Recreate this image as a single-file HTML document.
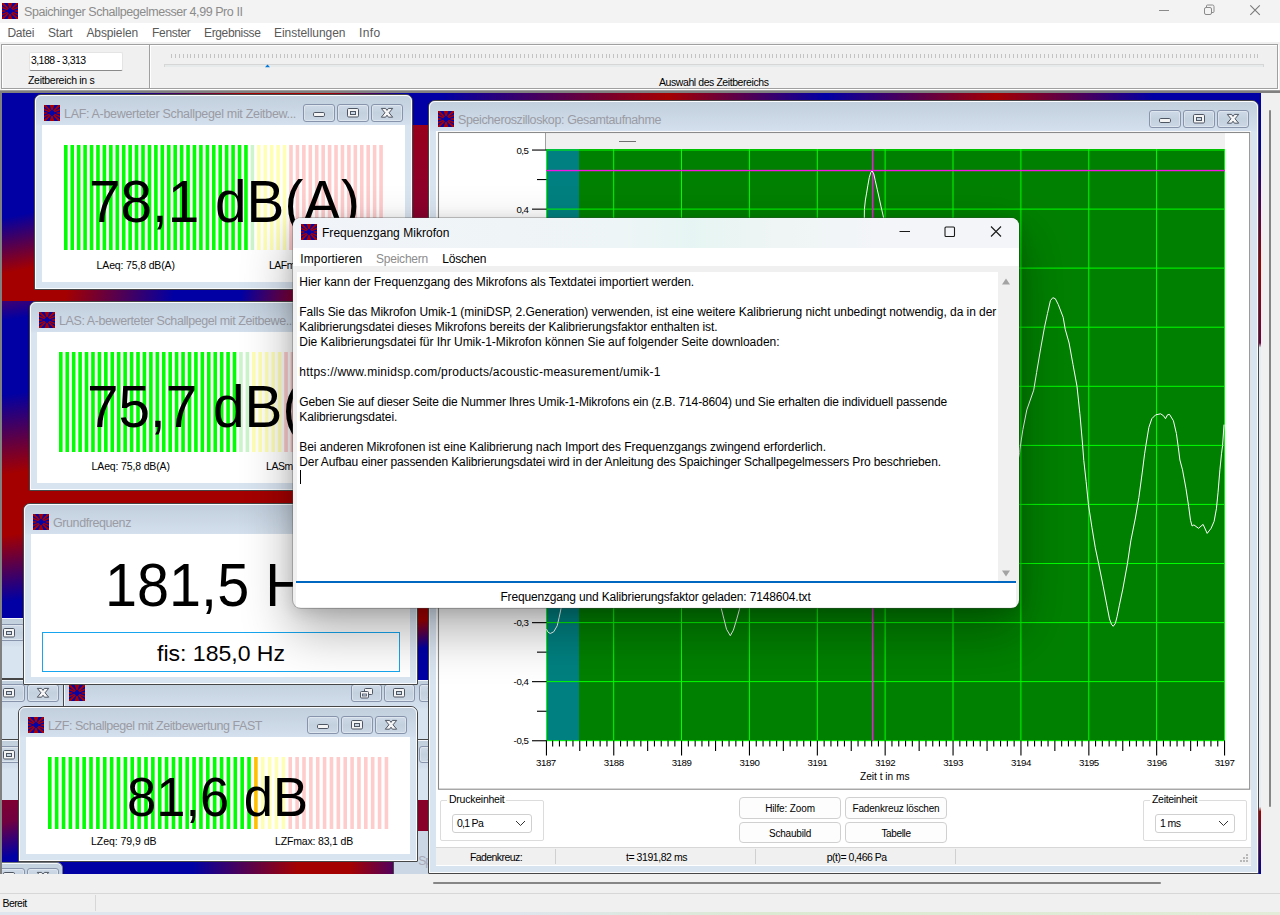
<!DOCTYPE html>
<html lang="de"><head><meta charset="utf-8"><title>Spaichinger Schallpegelmesser 4,99 Pro II</title>
<style>
*{box-sizing:border-box}
html,body{margin:0;padding:0}
body{width:1280px;height:915px;overflow:hidden;position:relative;background:#f0f0f0;font-family:"Liberation Sans",sans-serif;font-size:12px;color:#000}
.a{position:absolute}
.ico{display:block}
span[style]{white-space:pre}
/* main frame */
#tb{left:0;top:0;width:1280px;height:23px;background:#f3f3f3}
#tb .t{left:24px;top:3.5px;line-height:16px;font-size:12.5px;color:#8b8b8b;white-space:pre}
#mb{left:0;top:23px;width:1280px;height:19px;background:#fff}
#mb span{position:absolute;top:1.2px;line-height:16px;font-size:12px;color:#5a5a5a;white-space:pre}
#tool{left:0;top:42px;width:1280px;height:51px;background:#f0f0f0}
.grp{border:1px solid #a0a0a0;box-shadow:1px 1px 0 #fff, inset 1px 1px 0 #fff}
.sm{font-size:10.5px;line-height:13px;white-space:pre}
/* mdi */
#mdi{left:0;top:93px;width:1261px;height:781px;overflow:hidden;background:#0000a4}
#mdi>.in{position:absolute;left:0;top:-93px;width:1280px;height:915px}
.mw{position:absolute;border:1px solid #464646;border-radius:7px 7px 1px 1px;background:linear-gradient(#c1cedc 0,#d3dfec 29px,#d9e4f1 31px)}
.mw .hl{position:absolute;left:0;top:0;right:0;bottom:0;border:1px solid #fbfdff;border-radius:6px 6px 0 0}
.mw .mi{position:absolute;left:9px;top:10px}
.mw .ttl{position:absolute;left:29px;top:10.5px;line-height:16px;font-size:12.5px;color:#9a9ba4;white-space:pre}
.cb{position:absolute;top:9px;width:32px;height:18px;border:1px solid #8794ab;border-radius:3px;background:linear-gradient(#cfdae7,#c3d0de 50%,#cbd7e5);box-shadow:inset 0 0 0 1px rgba(255,255,255,.35)}
.cb svg{position:absolute;left:-1px;top:-1px}
.mw .cl{position:absolute;left:7px;top:30px;right:7px;bottom:7px;background:#fff;overflow:hidden}
.bars{position:absolute}
.big{position:absolute;white-space:pre;color:#000}
.chart{position:absolute}
.axl text{font-family:"Liberation Sans",sans-serif;font-size:9.7px;fill:#000;letter-spacing:-0.42px}
.btn{position:absolute;border:1px solid #d0d0d0;border-radius:4px;background:#fdfdfd;text-align:center;font-size:10px;line-height:21.5px;white-space:pre}
.combo{position:absolute;border:1px solid #d0d0d0;border-radius:3px;background:#fff;font-size:10.5px;line-height:17px;padding-left:4px;white-space:pre}
.gb{position:absolute;border:1px solid #dcdcdc;border-radius:2px}
.gb>i{position:absolute;left:6px;top:-8px;background:#fff;padding:0 2px;font-style:normal;font-size:10.5px;line-height:13px;white-space:pre}
/* dialog */
#dlg{left:293px;top:217.7px;width:726px;height:390px;border-radius:8px;background:#f0f0f0;box-shadow:0 0 0 1px rgba(70,70,70,.3),0 22px 50px 2px rgba(0,0,0,.31),0 3px 16px rgba(0,0,0,.14);overflow:hidden}
#dlg .cap{left:0;top:0;width:726px;height:30px;background:linear-gradient(90deg,#f1f4f9 0,#eef5f6 45%,#e6f5f3 55%,#eef5f4 66%,#f3f5f9 80%)}
#dlg .menu{left:0;top:30px;width:726px;height:18.3px;background:#fff}
#dlg .menu span{position:absolute;top:1.5px;font-size:12px;line-height:16px;white-space:pre}
#dlg .txt{left:4px;top:54px;width:717px;height:309px;background:#fff}
#dlg .txt div{position:absolute;left:2.3px;height:15px;line-height:15px;font-size:12px;white-space:pre}
</style></head>
<body>
<!-- ================= main title bar ================= -->
<div id="tb" class="a">
 <div class="a" style="left:2px;top:3px"><svg class="ico" viewBox="0 0 16 16" width="16" height="16"><rect width="16" height="16" fill="#0505a6"/><g fill="#ac0000"><polygon points="5.6,0 10.4,0 8.6,5 7.4,5"/><polygon points="5.6,16 10.4,16 8.6,11 7.4,11"/><polygon points="0,0 1.8,0 7,5.6 5.8,6.2 0,1.6"/><polygon points="16,0 14.2,0 9,5.6 10.2,6.2 16,1.6"/><polygon points="0,16 1.8,16 7,10.4 5.8,9.8 0,14.4"/><polygon points="16,16 14.2,16 9,10.4 10.2,9.8 16,14.4"/><polygon points="0,3.6 0,5.2 5.4,7.2 6,6.2"/><polygon points="16,3.6 16,5.2 10.6,7.2 10,6.2"/><polygon points="0,12.4 0,10.8 5.4,8.8 6,9.8"/><polygon points="16,12.4 16,10.8 10.6,8.8 10,9.8"/><polygon points="0,7 0,9 3.4,8.4 3.4,7.6"/><polygon points="16,7 16,9 12.6,8.4 12.6,7.6"/></g></svg></div>
 <div class="a t"><span style="letter-spacing:-0.433px">Spaichinger Schallpegelmesser 4,99 Pro II</span></div>
 <svg class="a" style="left:1150px;top:0" width="130" height="23" fill="none" stroke="#8a8a8a" stroke-width="1"><path d="M9 10.5h10"/><rect x="54.5" y="7.500" width="7" height="7" rx="1.5"/><path d="M56.500 7.500v-1.500q0-1 1-1h5q1.500 0 1.500 1.500v5q0 1-1 1h-1.500"/><path d="M100.300 5.300l9.500 9.500M109.800 5.300l-9.500 9.500" stroke="#7c7c7c" stroke-width="1.15"/></svg>
</div>
<div id="mb" class="a">
 <span style="left:7.500px"><span style="letter-spacing:-0.303px">Datei</span></span>
 <span style="left:48px"><span style="letter-spacing:-0.169px">Start</span></span>
 <span style="left:86.5px"><span style="letter-spacing:-0.135px">Abspielen</span></span>
 <span style="left:152px"><span style="letter-spacing:-0.312px">Fenster</span></span>
 <span style="left:204px"><span style="letter-spacing:-0.355px">Ergebnisse</span></span>
 <span style="left:274px"><span style="letter-spacing:-0.043px">Einstellungen</span></span>
 <span style="left:359px"><span style="letter-spacing:0.371px">Info</span></span>
</div>
<!-- ================= toolbar ================= -->
<div id="tool" class="a">
 <div class="a grp" style="left:1px;top:2px;width:149px;height:45px"></div>
 <div class="a grp" style="left:149px;top:2px;width:1129px;height:45px"></div>
 <div class="a" style="left:0;top:48px;width:1280px;height:1px;background:#a0a0a0"></div>
 <div class="a" style="left:0;top:49px;width:1280px;height:2px;background:#808080"></div>
 <div class="a" style="left:29px;top:10px;width:94px;height:19px;background:#fff;border:1px solid #e4e4e4;border-bottom-color:#8a8a8a;border-radius:2px"></div>
 <div class="a sm" style="left:31px;top:12.400px"><span style="letter-spacing:-0.569px">3,188 - 3,313</span></div>
 <div class="a sm" style="left:28px;top:32px"><span style="letter-spacing:-0.294px">Zeitbereich in s</span></div>
 <div class="a" style="left:171px;top:12px;width:1087px;height:4px;background:repeating-linear-gradient(90deg,#c3c3c3 0,#c3c3c3 1px,transparent 1px,transparent 3.88px)"></div>
 <div class="a" style="left:164px;top:22px;width:1100px;height:3px;background:#e7eaea;border:1px solid #d6d6d6;border-bottom:0"></div>
 <svg class="a" style="left:264px;top:21px" width="8" height="5"><path d="M1 4.300L3.500 1.400L6 4.300z" fill="#0078d7"/></svg>
 <div class="a sm" style="left:659px;top:34px"><span style="letter-spacing:-0.423px">Auswahl des Zeitbereichs</span></div>
</div>
<!-- ================= MDI client ================= -->
<div id="mdi" class="a"><div class="in">

<div class="a" style="left:0;top:93px;width:1261px;height:8px;background:linear-gradient(90deg,#0000a4 0,#0000a4 10%,#a40000 19.5%,#a40000 26%,#0000a4 32%,#0000a4 35%,#a40000 53%,#0000a4 65.5%,#a40000 79%,#0000a4 91.5%)"></div>
<div class="a" style="left:0;top:93px;width:40px;height:208px;background:linear-gradient(168deg,#0000a4 0,#0000a4 58%,#a40000 84%)"></div>
<div class="a" style="left:0;top:290px;width:300px;height:11px;background:linear-gradient(100deg,#a40000 0,#a40000 22%,#0000a4 58%,#0000a4 80%,#900020 100%)"></div>
<div class="a" style="left:0;top:301px;width:40px;height:330px;background:linear-gradient(172deg,#400070 0,#0000a4 6%,#0000a4 28%,#a40000 52%,#a40000 70%,#0000a4 90%)"></div>
<div class="a" style="left:24px;top:489px;width:276px;height:15px;background:#a40000"></div>
<div class="a" style="left:413px;top:125px;width:16px;height:100px;background:linear-gradient(#98001c,#880030)"></div>
<div class="a" style="left:418px;top:600px;width:11px;height:80px;background:linear-gradient(170deg,#a40000 0,#a40000 25%,#0000a4 60%)"></div>
<div class="a" style="left:0;top:800px;width:20px;height:74px;background:linear-gradient(165deg,#800030 0,#700040 30%,#0000a4 75%)"></div>
<div class="a" style="left:20px;top:860px;width:375px;height:14px;background:linear-gradient(90deg,#0000a4 0,#0000a4 46%,#a40000 74%,#a40000 88%,#500060 100%)"></div>
<div class="a" style="left:418px;top:798px;width:11px;height:36px;background:#880028"></div>
<div class="a" style="left:1258px;top:93px;width:3px;height:781px;background:linear-gradient(#0000a4 0,#0000a4 7%,#a40000 22%,#700040 32%,#e6ecf3 32.600%,#e6ecf3 91.400%,#a40000 92%,#500060 96%,#0000a4 100%)"></div>

<div class="a" style="left:2px;top:618px;width:22px;height:60px;border-top:1px solid #f4f8fc;background:linear-gradient(#c1cedc 0,#d3dfec 26px,#d9e4f1 28px)"></div><div class="cb" style="left:-7.5px;top:623.5px;width:32px;height:17.5px"><svg style="left:auto;right:-1px" viewBox="0 0 32 18" width="32" height="18"><rect x="10.5" y="4.5" width="11" height="8.5" rx="1.2" fill="#f4f4f4" stroke="#4e5563"/><rect x="13.5" y="7.5" width="5" height="3" fill="#c9d6e4" stroke="#4e5563"/></svg></div><div class="a" style="left:2px;top:678px;width:22px;height:1.500px;background:#464646"></div><div class="a" style="left:2px;top:679.500px;width:428px;height:60px;border-top:1px solid #f4f8fc;background:linear-gradient(#c1cedc 0,#d3dfec 26px,#d9e4f1 28px)"></div><div class="cb" style="left:-7.5px;top:684px;width:32px;height:18px"><svg style="left:auto;right:-1px" viewBox="0 0 32 18" width="32" height="18"><rect x="10.5" y="4.5" width="11" height="8.5" rx="1.2" fill="#f4f4f4" stroke="#4e5563"/><rect x="13.5" y="7.5" width="5" height="3" fill="#c9d6e4" stroke="#4e5563"/></svg></div><div class="cb" style="left:27.3px;top:684px;width:31.5px;height:18px"><svg style="left:auto;right:-1px" viewBox="0 0 32 18" width="32" height="18"><path d="M10.300 4.400h4.300l1.400 2l1.400-2h4.300l-3.650 4.400l3.650 4.400h-4.300l-1.400-2l-1.400 2h-4.300l3.650-4.400z" fill="#f6f6f6" stroke="#4e5563" stroke-width="1" stroke-linejoin="round"/></svg></div><div class="a" style="left:63px;top:680px;width:1.400px;height:30px;background:#464646"></div><div class="a" style="left:64.400px;top:680px;width:1px;height:30px;background:#f4f8fc"></div><div class="a" style="left:69px;top:685px"><svg class="ico" viewBox="0 0 16 16" width="16" height="16"><rect width="16" height="16" fill="#0505a6"/><g fill="#ac0000"><polygon points="5.6,0 10.4,0 8.6,5 7.4,5"/><polygon points="5.6,16 10.4,16 8.6,11 7.4,11"/><polygon points="0,0 1.8,0 7,5.6 5.8,6.2 0,1.6"/><polygon points="16,0 14.2,0 9,5.6 10.2,6.2 16,1.6"/><polygon points="0,16 1.8,16 7,10.4 5.8,9.8 0,14.4"/><polygon points="16,16 14.2,16 9,10.4 10.2,9.8 16,14.4"/><polygon points="0,3.6 0,5.2 5.4,7.2 6,6.2"/><polygon points="16,3.6 16,5.2 10.6,7.2 10,6.2"/><polygon points="0,12.4 0,10.8 5.4,8.8 6,9.8"/><polygon points="16,12.4 16,10.8 10.6,8.8 10,9.8"/><polygon points="0,7 0,9 3.4,8.4 3.4,7.6"/><polygon points="16,7 16,9 12.6,8.4 12.6,7.6"/></g></svg></div><div class="cb" style="left:350.6px;top:684px;width:31px;height:18px"><svg style="left:auto;right:-1px" viewBox="0 0 32 18" width="32" height="18"><rect x="14.5" y="4.5" width="8" height="6" rx="1" fill="#f4f4f4" stroke="#4e5563"/><rect x="10.5" y="7.5" width="8" height="6.5" rx="1" fill="#f4f4f4" stroke="#4e5563"/><rect x="12.5" y="10" width="4" height="2" fill="#c9d6e4" stroke="#4e5563" stroke-width=".8"/></svg></div><div class="cb" style="left:384.3px;top:684px;width:31.2px;height:18px"><svg style="left:auto;right:-1px" viewBox="0 0 32 18" width="32" height="18"><rect x="10.5" y="4.5" width="11" height="8.5" rx="1.2" fill="#f4f4f4" stroke="#4e5563"/><rect x="13.5" y="7.5" width="5" height="3" fill="#c9d6e4" stroke="#4e5563"/></svg></div><div class="cb" style="left:418.5px;top:684px;width:31px;height:18px"><svg style="left:auto;right:-1px" viewBox="0 0 32 18" width="32" height="18"><path d="M10.300 4.400h4.300l1.400 2l1.400-2h4.300l-3.650 4.400l3.650 4.400h-4.300l-1.400-2l-1.400 2h-4.300l3.650-4.400z" fill="#f6f6f6" stroke="#4e5563" stroke-width="1" stroke-linejoin="round"/></svg></div><div class="a" style="left:2px;top:738.500px;width:428px;height:1.800px;background:#464646"></div><div class="a" style="left:2px;top:740.300px;width:428px;height:60px;border-top:1px solid #f4f8fc;background:linear-gradient(#c1cedc 0,#d3dfec 26px,#d9e4f1 28px)"></div><div class="cb" style="left:-7.5px;top:745.5px;width:32px;height:17.5px"><svg style="left:auto;right:-1px" viewBox="0 0 32 18" width="32" height="18"><rect x="10.5" y="4.5" width="11" height="8.5" rx="1.2" fill="#f4f4f4" stroke="#4e5563"/><rect x="13.5" y="7.5" width="5" height="3" fill="#c9d6e4" stroke="#4e5563"/></svg></div><div class="cb" style="left:418.5px;top:745.5px;width:31px;height:17.5px"><svg style="left:auto;right:-1px" viewBox="0 0 32 18" width="32" height="18"><path d="M10.300 4.400h4.300l1.400 2l1.400-2h4.300l-3.650 4.400l3.650 4.400h-4.300l-1.400-2l-1.400 2h-4.300l3.650-4.400z" fill="#f6f6f6" stroke="#4e5563" stroke-width="1" stroke-linejoin="round"/></svg></div><div class="a" style="left:393.300px;top:831px;width:40px;height:45px;border-left:1.200px solid #464646;background:#cbd7e4"></div><div class="a" style="left:418.300px;top:853px;font-size:12px;line-height:16px;letter-spacing:-1px;color:#a6a8b6;white-space:pre">Speicheroszilloskop</div><div class="a" style="left:-10px;top:862px;width:72.500px;height:20px;border:1px solid #70757c;border-radius:0 6px 0 0;box-shadow:inset 0 1px 0 #f4f8fc;background:#c5d2e0"></div><div class="cb" style="left:-7.5px;top:867.5px;width:32px;height:18px"><svg style="left:auto;right:-1px" viewBox="0 0 32 18" width="32" height="18"><rect x="10.5" y="4.5" width="11" height="8.5" rx="1.2" fill="#f4f4f4" stroke="#4e5563"/><rect x="13.5" y="7.5" width="5" height="3" fill="#c9d6e4" stroke="#4e5563"/></svg></div><div class="cb" style="left:27.3px;top:867.5px;width:31.5px;height:18px"><svg style="left:auto;right:-1px" viewBox="0 0 32 18" width="32" height="18"><path d="M10.300 4.400h4.300l1.400 2l1.400-2h4.300l-3.650 4.400l3.650 4.400h-4.300l-1.400-2l-1.400 2h-4.300l3.650-4.400z" fill="#f6f6f6" stroke="#4e5563" stroke-width="1" stroke-linejoin="round"/></svg></div>
<div class="mw " style="left:34px;top:94px;width:379px;height:196px"><div class="hl"></div><div class="mi"><svg class="ico" viewBox="0 0 16 16" width="16" height="16"><rect width="16" height="16" fill="#0505a6"/><g fill="#ac0000"><polygon points="5.6,0 10.4,0 8.6,5 7.4,5"/><polygon points="5.6,16 10.4,16 8.6,11 7.4,11"/><polygon points="0,0 1.8,0 7,5.6 5.8,6.2 0,1.6"/><polygon points="16,0 14.2,0 9,5.6 10.2,6.2 16,1.6"/><polygon points="0,16 1.8,16 7,10.4 5.8,9.8 0,14.4"/><polygon points="16,16 14.2,16 9,10.4 10.2,9.8 16,14.4"/><polygon points="0,3.6 0,5.2 5.4,7.2 6,6.2"/><polygon points="16,3.6 16,5.2 10.6,7.2 10,6.2"/><polygon points="0,12.4 0,10.8 5.4,8.8 6,9.8"/><polygon points="16,12.4 16,10.8 10.6,8.8 10,9.8"/><polygon points="0,7 0,9 3.4,8.4 3.4,7.6"/><polygon points="16,7 16,9 12.6,8.4 12.6,7.6"/></g></svg></div><div class="ttl"><span style="letter-spacing:-0.317px">LAF: A-bewerteter Schallpegel mit Zeitbew...</span></div><div class="cb" style="left:268px"><svg viewBox="0 0 32 18" width="32" height="18"><rect x="10.5" y="8.5" width="11" height="4" rx="1.2" fill="#f4f4f4" stroke="#4e5563" stroke-width="1"/></svg></div><div class="cb" style="left:302px"><svg viewBox="0 0 32 18" width="32" height="18"><rect x="10.5" y="4.5" width="11" height="8.5" rx="1.2" fill="#f4f4f4" stroke="#4e5563"/><rect x="13.5" y="7.5" width="5" height="3" fill="#c9d6e4" stroke="#4e5563"/></svg></div><div class="cb" style="left:336px"><svg viewBox="0 0 32 18" width="32" height="18"><path d="M10.300 4.400h4.300l1.400 2l1.400-2h4.300l-3.650 4.400l3.650 4.400h-4.300l-1.400-2l-1.400 2h-4.300l3.650-4.400z" fill="#f6f6f6" stroke="#4e5563" stroke-width="1" stroke-linejoin="round"/></svg></div><div class="cl"><svg class="bars" style="left:22px;top:20px" width="322" height="105"><rect x="0.00" y="0" width="3.6" height="105" fill="#00ff00"/><rect x="6.43" y="0" width="3.6" height="105" fill="#00ff00"/><rect x="12.87" y="0" width="3.6" height="105" fill="#00ff00"/><rect x="19.30" y="0" width="3.6" height="105" fill="#00ff00"/><rect x="25.74" y="0" width="3.6" height="105" fill="#00ff00"/><rect x="32.17" y="0" width="3.6" height="105" fill="#00ff00"/><rect x="38.60" y="0" width="3.6" height="105" fill="#00ff00"/><rect x="45.04" y="0" width="3.6" height="105" fill="#00ff00"/><rect x="51.47" y="0" width="3.6" height="105" fill="#00ff00"/><rect x="57.91" y="0" width="3.6" height="105" fill="#00ff00"/><rect x="64.34" y="0" width="3.6" height="105" fill="#00ff00"/><rect x="70.77" y="0" width="3.6" height="105" fill="#00ff00"/><rect x="77.21" y="0" width="3.6" height="105" fill="#00ff00"/><rect x="83.64" y="0" width="3.6" height="105" fill="#00ff00"/><rect x="90.08" y="0" width="3.6" height="105" fill="#00ff00"/><rect x="96.51" y="0" width="3.6" height="105" fill="#00ff00"/><rect x="102.94" y="0" width="3.6" height="105" fill="#00ff00"/><rect x="109.38" y="0" width="3.6" height="105" fill="#00ff00"/><rect x="115.81" y="0" width="3.6" height="105" fill="#00ff00"/><rect x="122.25" y="0" width="3.6" height="105" fill="#00ff00"/><rect x="128.68" y="0" width="3.6" height="105" fill="#00ff00"/><rect x="135.11" y="0" width="3.6" height="105" fill="#00ff00"/><rect x="141.55" y="0" width="3.6" height="105" fill="#00ff00"/><rect x="147.98" y="0" width="3.6" height="105" fill="#00ff00"/><rect x="154.42" y="0" width="3.6" height="105" fill="#00ff00"/><rect x="160.85" y="0" width="3.6" height="105" fill="#00ff00"/><rect x="167.28" y="0" width="3.6" height="105" fill="#00ff00"/><rect x="173.72" y="0" width="3.6" height="105" fill="#00ff00"/><rect x="180.15" y="0" width="3.6" height="105" fill="#00ff00"/><rect x="186.59" y="0" width="3.6" height="105" fill="#ccf5cc"/><rect x="193.02" y="0" width="3.6" height="105" fill="#ffffb4"/><rect x="199.45" y="0" width="3.6" height="105" fill="#ffffb4"/><rect x="205.89" y="0" width="3.6" height="105" fill="#ffffb4"/><rect x="212.32" y="0" width="3.6" height="105" fill="#ffffb4"/><rect x="218.76" y="0" width="3.6" height="105" fill="#ffffb4"/><rect x="225.19" y="0" width="3.6" height="105" fill="#ffcccc"/><rect x="231.62" y="0" width="3.6" height="105" fill="#ffcccc"/><rect x="238.06" y="0" width="3.6" height="105" fill="#ffcccc"/><rect x="244.49" y="0" width="3.6" height="105" fill="#ffcccc"/><rect x="250.93" y="0" width="3.6" height="105" fill="#ffcccc"/><rect x="257.36" y="0" width="3.6" height="105" fill="#ffcccc"/><rect x="263.79" y="0" width="3.6" height="105" fill="#ffcccc"/><rect x="270.23" y="0" width="3.6" height="105" fill="#ffcccc"/><rect x="276.66" y="0" width="3.6" height="105" fill="#ffcccc"/><rect x="283.10" y="0" width="3.6" height="105" fill="#ffcccc"/><rect x="289.53" y="0" width="3.6" height="105" fill="#ffcccc"/><rect x="295.96" y="0" width="3.6" height="105" fill="#ffcccc"/><rect x="302.40" y="0" width="3.6" height="105" fill="#ffcccc"/><rect x="308.83" y="0" width="3.6" height="105" fill="#ffcccc"/><rect x="315.27" y="0" width="3.6" height="105" fill="#ffcccc"/></svg><div class="big" style="left:46.7px;top:47.1px;font-size:59.5px;line-height:59.5px;"><span style="display:inline-block;transform-origin:0 0;transform:scaleX(0.9528)">78,1 dB(A)</span></div><div class="a sm" style="left:54.6px;top:133.5px"><span style="letter-spacing:-0.148px">LAeq: 75,8 dB(A)</span></div><div class="a sm" style="left:227px;top:133.5px"><span style="letter-spacing:-0.507px">LAFmax: 80,2 dB(A)</span></div></div></div>
<div class="mw " style="left:29px;top:301px;width:379px;height:190px"><div class="hl"></div><div class="mi"><svg class="ico" viewBox="0 0 16 16" width="16" height="16"><rect width="16" height="16" fill="#0505a6"/><g fill="#ac0000"><polygon points="5.6,0 10.4,0 8.6,5 7.4,5"/><polygon points="5.6,16 10.4,16 8.6,11 7.4,11"/><polygon points="0,0 1.8,0 7,5.6 5.8,6.2 0,1.6"/><polygon points="16,0 14.2,0 9,5.6 10.2,6.2 16,1.6"/><polygon points="0,16 1.8,16 7,10.4 5.8,9.8 0,14.4"/><polygon points="16,16 14.2,16 9,10.4 10.2,9.8 16,14.4"/><polygon points="0,3.6 0,5.2 5.4,7.2 6,6.2"/><polygon points="16,3.6 16,5.2 10.6,7.2 10,6.2"/><polygon points="0,12.4 0,10.8 5.4,8.8 6,9.8"/><polygon points="16,12.4 16,10.8 10.6,8.8 10,9.8"/><polygon points="0,7 0,9 3.4,8.4 3.4,7.6"/><polygon points="16,7 16,9 12.6,8.4 12.6,7.6"/></g></svg></div><div class="ttl"><span style="letter-spacing:-0.407px">LAS: A-bewerteter Schallpegel mit Zeitbewe...</span></div><div class="cb" style="left:268px"><svg viewBox="0 0 32 18" width="32" height="18"><rect x="10.5" y="8.5" width="11" height="4" rx="1.2" fill="#f4f4f4" stroke="#4e5563" stroke-width="1"/></svg></div><div class="cb" style="left:302px"><svg viewBox="0 0 32 18" width="32" height="18"><rect x="10.5" y="4.5" width="11" height="8.5" rx="1.2" fill="#f4f4f4" stroke="#4e5563"/><rect x="13.5" y="7.5" width="5" height="3" fill="#c9d6e4" stroke="#4e5563"/></svg></div><div class="cb" style="left:336px"><svg viewBox="0 0 32 18" width="32" height="18"><path d="M10.300 4.400h4.300l1.400 2l1.400-2h4.300l-3.650 4.400l3.650 4.400h-4.300l-1.400-2l-1.400 2h-4.300l3.650-4.400z" fill="#f6f6f6" stroke="#4e5563" stroke-width="1" stroke-linejoin="round"/></svg></div><div class="cl"><svg class="bars" style="left:22px;top:20px" width="322" height="100"><rect x="0.00" y="0" width="3.6" height="100" fill="#00ff00"/><rect x="6.43" y="0" width="3.6" height="100" fill="#00ff00"/><rect x="12.87" y="0" width="3.6" height="100" fill="#00ff00"/><rect x="19.30" y="0" width="3.6" height="100" fill="#00ff00"/><rect x="25.74" y="0" width="3.6" height="100" fill="#00ff00"/><rect x="32.17" y="0" width="3.6" height="100" fill="#00ff00"/><rect x="38.60" y="0" width="3.6" height="100" fill="#00ff00"/><rect x="45.04" y="0" width="3.6" height="100" fill="#00ff00"/><rect x="51.47" y="0" width="3.6" height="100" fill="#00ff00"/><rect x="57.91" y="0" width="3.6" height="100" fill="#00ff00"/><rect x="64.34" y="0" width="3.6" height="100" fill="#00ff00"/><rect x="70.77" y="0" width="3.6" height="100" fill="#00ff00"/><rect x="77.21" y="0" width="3.6" height="100" fill="#00ff00"/><rect x="83.64" y="0" width="3.6" height="100" fill="#00ff00"/><rect x="90.08" y="0" width="3.6" height="100" fill="#00ff00"/><rect x="96.51" y="0" width="3.6" height="100" fill="#00ff00"/><rect x="102.94" y="0" width="3.6" height="100" fill="#00ff00"/><rect x="109.38" y="0" width="3.6" height="100" fill="#00ff00"/><rect x="115.81" y="0" width="3.6" height="100" fill="#00ff00"/><rect x="122.25" y="0" width="3.6" height="100" fill="#00ff00"/><rect x="128.68" y="0" width="3.6" height="100" fill="#00ff00"/><rect x="135.11" y="0" width="3.6" height="100" fill="#00ff00"/><rect x="141.55" y="0" width="3.6" height="100" fill="#00ff00"/><rect x="147.98" y="0" width="3.6" height="100" fill="#00ff00"/><rect x="154.42" y="0" width="3.6" height="100" fill="#00ff00"/><rect x="160.85" y="0" width="3.6" height="100" fill="#00ff00"/><rect x="167.28" y="0" width="3.6" height="100" fill="#00ff00"/><rect x="173.72" y="0" width="3.6" height="100" fill="#00ff00"/><rect x="180.15" y="0" width="3.6" height="100" fill="#ccf5cc"/><rect x="186.59" y="0" width="3.6" height="100" fill="#ccf5cc"/><rect x="193.02" y="0" width="3.6" height="100" fill="#ffffb4"/><rect x="199.45" y="0" width="3.6" height="100" fill="#ffffb4"/><rect x="205.89" y="0" width="3.6" height="100" fill="#ffffb4"/><rect x="212.32" y="0" width="3.6" height="100" fill="#ffffb4"/><rect x="218.76" y="0" width="3.6" height="100" fill="#ffffb4"/><rect x="225.19" y="0" width="3.6" height="100" fill="#ffcccc"/><rect x="231.62" y="0" width="3.6" height="100" fill="#ffcccc"/><rect x="238.06" y="0" width="3.6" height="100" fill="#ffcccc"/><rect x="244.49" y="0" width="3.6" height="100" fill="#ffcccc"/><rect x="250.93" y="0" width="3.6" height="100" fill="#ffcccc"/><rect x="257.36" y="0" width="3.6" height="100" fill="#ffcccc"/><rect x="263.79" y="0" width="3.6" height="100" fill="#ffcccc"/><rect x="270.23" y="0" width="3.6" height="100" fill="#ffcccc"/><rect x="276.66" y="0" width="3.6" height="100" fill="#ffcccc"/><rect x="283.10" y="0" width="3.6" height="100" fill="#ffcccc"/><rect x="289.53" y="0" width="3.6" height="100" fill="#ffcccc"/><rect x="295.96" y="0" width="3.6" height="100" fill="#ffcccc"/><rect x="302.40" y="0" width="3.6" height="100" fill="#ffcccc"/><rect x="308.83" y="0" width="3.6" height="100" fill="#ffcccc"/><rect x="315.27" y="0" width="3.6" height="100" fill="#ffcccc"/></svg><div class="big" style="left:49.5px;top:45.1px;font-size:59.5px;line-height:59.5px;"><span style="display:inline-block;transform-origin:0 0;transform:scaleX(0.9528)">75,7 dB(A)</span></div><div class="a sm" style="left:54.6px;top:128.3px"><span style="letter-spacing:-0.148px">LAeq: 75,8 dB(A)</span></div><div class="a sm" style="left:229px;top:128.3px"><span style="letter-spacing:-0.429px">LASmax: 77,6 dB(A)</span></div></div></div>
<div class="mw " style="left:23px;top:503px;width:394.8px;height:182px"><div class="hl"></div><div class="mi"><svg class="ico" viewBox="0 0 16 16" width="16" height="16"><rect width="16" height="16" fill="#0505a6"/><g fill="#ac0000"><polygon points="5.6,0 10.4,0 8.6,5 7.4,5"/><polygon points="5.6,16 10.4,16 8.6,11 7.4,11"/><polygon points="0,0 1.8,0 7,5.6 5.8,6.2 0,1.6"/><polygon points="16,0 14.2,0 9,5.6 10.2,6.2 16,1.6"/><polygon points="0,16 1.8,16 7,10.4 5.8,9.8 0,14.4"/><polygon points="16,16 14.2,16 9,10.4 10.2,9.8 16,14.4"/><polygon points="0,3.6 0,5.2 5.4,7.2 6,6.2"/><polygon points="16,3.6 16,5.2 10.6,7.2 10,6.2"/><polygon points="0,12.4 0,10.8 5.4,8.8 6,9.8"/><polygon points="16,12.4 16,10.8 10.6,8.8 10,9.8"/><polygon points="0,7 0,9 3.4,8.4 3.4,7.6"/><polygon points="16,7 16,9 12.6,8.4 12.6,7.6"/></g></svg></div><div class="ttl"><span style="letter-spacing:-0.415px">Grundfrequenz</span></div><div class="cb" style="left:283px"><svg viewBox="0 0 32 18" width="32" height="18"><rect x="10.5" y="8.5" width="11" height="4" rx="1.2" fill="#f4f4f4" stroke="#4e5563" stroke-width="1"/></svg></div><div class="cb" style="left:317px"><svg viewBox="0 0 32 18" width="32" height="18"><rect x="10.5" y="4.5" width="11" height="8.5" rx="1.2" fill="#f4f4f4" stroke="#4e5563"/><rect x="13.5" y="7.5" width="5" height="3" fill="#c9d6e4" stroke="#4e5563"/></svg></div><div class="cb" style="left:351px"><svg viewBox="0 0 32 18" width="32" height="18"><path d="M10.300 4.400h4.300l1.400 2l1.400-2h4.300l-3.650 4.400l3.650 4.400h-4.300l-1.400-2l-1.400 2h-4.300l3.650-4.400z" fill="#f6f6f6" stroke="#4e5563" stroke-width="1" stroke-linejoin="round"/></svg></div><div class="cl"><div class="big" style="left:73.9px;top:20.6px;font-size:61.3px;line-height:61.3px;"><span style="display:inline-block;transform-origin:0 0;transform:scaleX(0.9399)">181,5 Hz</span></div><div class="a" style="left:10.5px;top:98px;width:358.5px;height:40px;border:1px solid #16a5ee;background:#fff"></div><div class="big" style="left:126.2px;top:108.65px;font-size:22.5px;line-height:22.5px;"><span style="display:inline-block;transform-origin:0 0;transform:scaleX(1.0235)">fis: 185,0 Hz</span></div></div></div>
<div class="mw " style="left:428px;top:100px;width:831px;height:774px"><div class="hl"></div><div class="mi"><svg class="ico" viewBox="0 0 16 16" width="16" height="16"><rect width="16" height="16" fill="#0505a6"/><g fill="#ac0000"><polygon points="5.6,0 10.4,0 8.6,5 7.4,5"/><polygon points="5.6,16 10.4,16 8.6,11 7.4,11"/><polygon points="0,0 1.8,0 7,5.6 5.8,6.2 0,1.6"/><polygon points="16,0 14.2,0 9,5.6 10.2,6.2 16,1.6"/><polygon points="0,16 1.8,16 7,10.4 5.8,9.8 0,14.4"/><polygon points="16,16 14.2,16 9,10.4 10.2,9.8 16,14.4"/><polygon points="0,3.6 0,5.2 5.4,7.2 6,6.2"/><polygon points="16,3.6 16,5.2 10.6,7.2 10,6.2"/><polygon points="0,12.4 0,10.8 5.4,8.8 6,9.8"/><polygon points="16,12.4 16,10.8 10.6,8.8 10,9.8"/><polygon points="0,7 0,9 3.4,8.4 3.4,7.6"/><polygon points="16,7 16,9 12.6,8.4 12.6,7.6"/></g></svg></div><div class="ttl"><span style="letter-spacing:-0.394px">Speicheroszilloskop: Gesamtaufnahme</span></div><div class="cb" style="left:720px"><svg viewBox="0 0 32 18" width="32" height="18"><rect x="10.5" y="8.5" width="11" height="4" rx="1.2" fill="#f4f4f4" stroke="#4e5563" stroke-width="1"/></svg></div><div class="cb" style="left:754px"><svg viewBox="0 0 32 18" width="32" height="18"><rect x="10.5" y="4.5" width="11" height="8.5" rx="1.2" fill="#f4f4f4" stroke="#4e5563"/><rect x="13.5" y="7.5" width="5" height="3" fill="#c9d6e4" stroke="#4e5563"/></svg></div><div class="cb" style="left:788px"><svg viewBox="0 0 32 18" width="32" height="18"><path d="M10.300 4.400h4.300l1.400 2l1.400-2h4.300l-3.650 4.400l3.650 4.400h-4.300l-1.400-2l-1.400 2h-4.300l3.650-4.400z" fill="#f6f6f6" stroke="#4e5563" stroke-width="1" stroke-linejoin="round"/></svg></div><div class="cl"><svg class="chart" viewBox="436 131 815 660" width="815" height="660" style="left:0;top:0"><rect x="436" y="131" width="815" height="657" fill="#fff"/><rect x="545" y="132" width="680" height="18" fill="#f0f0f0"/><rect x="545" y="132" width="1" height="18" fill="#a0a0a0"/><rect x="619" y="141" width="17" height="1" fill="#707070"/><rect x="546" y="149" width="679" height="592" fill="#008000"/><rect x="546" y="149" width="33" height="592" fill="#008080"/><g fill="#00ff00"><rect x="546.0" y="149" width="1" height="592" /><rect x="613.2" y="149" width="1" height="592" /><rect x="681.0" y="149" width="1" height="592" /><rect x="748.9" y="149" width="1" height="592" /><rect x="816.8" y="149" width="1" height="592" /><rect x="884.6" y="149" width="1" height="592" /><rect x="952.5" y="149" width="1" height="592" /><rect x="1020.4" y="149" width="1" height="592" /><rect x="1088.3" y="149" width="1" height="592" /><rect x="1156.1" y="149" width="1" height="592" /><rect x="1224.0" y="149" width="1" height="592" /><rect x="546" y="149.5" width="679" height="1"/><rect x="546" y="208.6" width="679" height="1"/><rect x="546" y="267.6" width="679" height="1"/><rect x="546" y="326.7" width="679" height="1"/><rect x="546" y="385.8" width="679" height="1"/><rect x="546" y="444.9" width="679" height="1"/><rect x="546" y="503.9" width="679" height="1"/><rect x="546" y="563.0" width="679" height="1"/><rect x="546" y="622.1" width="679" height="1"/><rect x="546" y="681.1" width="679" height="1"/><rect x="546" y="740.2" width="679" height="1"/></g><rect x="546" y="169.85" width="679" height="1.4" fill="#f514e4"/><rect x="871.9" y="149" width="1.45" height="592" fill="#f514e4"/><g fill="none" stroke="#fff" stroke-width="1"><polyline points="864.2,230.0 864.4,209.3 865.4,200.0 866.6,193.1 867.9,185.2 869.3,177.4 870.8,172.4 872.1,171.0 873.8,173.9 875.2,180.3 877.2,189.2 879.2,198.0 881.1,206.9 883.6,217.7 886.0,228.0"/><polyline points="1016.0,470.0 1019.6,452.6 1019.9,449.2 1022.9,429.5 1026.8,409.9 1033.7,390.2 1036.6,372.5 1040.6,348.9 1044.5,327.2 1047.5,313.4 1050.4,300.7 1052.8,297.7 1055.3,298.7 1058.3,304.6 1063.2,317.4 1065.2,329.2 1069.1,343.0 1073.0,364.6 1077.0,386.3 1079.9,413.8 1082.2,440.0 1083.8,460.6 1086.1,481.3 1088.4,504.2 1091.9,527.2 1095.3,547.8 1098.7,563.9 1103.3,586.8 1106.8,605.2 1109.5,618.9 1111.4,624.2 1113.2,626.3 1115.3,623.5 1117.1,616.6 1119.4,605.2 1122.8,589.1 1127.4,563.9 1130.8,540.9 1135.4,518.0 1138.9,497.4 1142.3,472.1 1144.6,453.8 1145.9,445.3 1148.8,427.6 1151.8,418.7 1155.7,414.8 1160.6,413.8 1163.6,415.8 1165.5,418.7 1167.5,414.8 1169.5,414.4 1173.4,420.7 1176.4,433.5 1178.3,447.3 1179.9,460.0 1182.5,469.8 1185.9,488.2 1188.7,506.5 1190.5,520.3 1192.1,526.0 1193.9,524.9 1198.5,528.3 1203.1,524.4 1207.2,533.4 1211.1,528.3 1214.1,521.4 1216.4,508.8 1218.0,492.8 1219.9,469.8 1221.5,453.8 1222.6,445.3 1224.0,424.6"/><polyline points="546.5,629.2 548.0,632.2 550.3,633.5 553.7,631.8 557.2,625.8 559.2,617.2 561.0,608.6 562.5,600.0"/><polyline points="719.5,600.0 721.3,608.6 723.9,618.9 726.5,629.2 730.3,635.7 733.4,630.1 736.8,618.9 739.4,609.5 741.5,600.0"/></g><g fill="#000"><rect x="532" y="149.5" width="14.5" height="1.1"/><rect x="537" y="179.0" width="9.5" height="1.1"/><rect x="532" y="208.6" width="14.5" height="1.1"/><rect x="537" y="238.1" width="9.5" height="1.1"/><rect x="532" y="267.6" width="14.5" height="1.1"/><rect x="537" y="297.2" width="9.5" height="1.1"/><rect x="532" y="326.7" width="14.5" height="1.1"/><rect x="537" y="356.2" width="9.5" height="1.1"/><rect x="532" y="385.8" width="14.5" height="1.1"/><rect x="537" y="415.3" width="9.5" height="1.1"/><rect x="532" y="444.9" width="14.5" height="1.1"/><rect x="537" y="474.4" width="9.5" height="1.1"/><rect x="532" y="503.9" width="14.5" height="1.1"/><rect x="537" y="533.5" width="9.5" height="1.1"/><rect x="532" y="563.0" width="14.5" height="1.1"/><rect x="537" y="592.5" width="9.5" height="1.1"/><rect x="532" y="622.1" width="14.5" height="1.1"/><rect x="537" y="651.6" width="9.5" height="1.1"/><rect x="532" y="681.1" width="14.5" height="1.1"/><rect x="537" y="710.7" width="9.5" height="1.1"/><rect x="532" y="740.2" width="14.5" height="1.1"/><rect x="545.9" y="740.5" width="1.1" height="15.0"/><rect x="552.1" y="740.5" width="1.1" height="6.0"/><rect x="558.9" y="740.5" width="1.1" height="6.0"/><rect x="565.7" y="740.5" width="1.1" height="6.0"/><rect x="572.4" y="740.5" width="1.1" height="6.0"/><rect x="579.2" y="740.5" width="1.1" height="10.5"/><rect x="586.0" y="740.5" width="1.1" height="6.0"/><rect x="592.8" y="740.5" width="1.1" height="6.0"/><rect x="599.6" y="740.5" width="1.1" height="6.0"/><rect x="606.4" y="740.5" width="1.1" height="6.0"/><rect x="613.2" y="740.5" width="1.1" height="15.0"/><rect x="620.0" y="740.5" width="1.1" height="6.0"/><rect x="626.7" y="740.5" width="1.1" height="6.0"/><rect x="633.5" y="740.5" width="1.1" height="6.0"/><rect x="640.3" y="740.5" width="1.1" height="6.0"/><rect x="647.1" y="740.5" width="1.1" height="10.5"/><rect x="653.9" y="740.5" width="1.1" height="6.0"/><rect x="660.7" y="740.5" width="1.1" height="6.0"/><rect x="667.5" y="740.5" width="1.1" height="6.0"/><rect x="674.3" y="740.5" width="1.1" height="6.0"/><rect x="681.0" y="740.5" width="1.1" height="15.0"/><rect x="687.8" y="740.5" width="1.1" height="6.0"/><rect x="694.6" y="740.5" width="1.1" height="6.0"/><rect x="701.4" y="740.5" width="1.1" height="6.0"/><rect x="708.2" y="740.5" width="1.1" height="6.0"/><rect x="715.0" y="740.5" width="1.1" height="10.5"/><rect x="721.8" y="740.5" width="1.1" height="6.0"/><rect x="728.5" y="740.5" width="1.1" height="6.0"/><rect x="735.3" y="740.5" width="1.1" height="6.0"/><rect x="742.1" y="740.5" width="1.1" height="6.0"/><rect x="748.9" y="740.5" width="1.1" height="15.0"/><rect x="755.7" y="740.5" width="1.1" height="6.0"/><rect x="762.5" y="740.5" width="1.1" height="6.0"/><rect x="769.3" y="740.5" width="1.1" height="6.0"/><rect x="776.1" y="740.5" width="1.1" height="6.0"/><rect x="782.8" y="740.5" width="1.1" height="10.5"/><rect x="789.6" y="740.5" width="1.1" height="6.0"/><rect x="796.4" y="740.5" width="1.1" height="6.0"/><rect x="803.2" y="740.5" width="1.1" height="6.0"/><rect x="810.0" y="740.5" width="1.1" height="6.0"/><rect x="816.8" y="740.5" width="1.1" height="15.0"/><rect x="823.6" y="740.5" width="1.1" height="6.0"/><rect x="830.4" y="740.5" width="1.1" height="6.0"/><rect x="837.1" y="740.5" width="1.1" height="6.0"/><rect x="843.9" y="740.5" width="1.1" height="6.0"/><rect x="850.7" y="740.5" width="1.1" height="10.5"/><rect x="857.5" y="740.5" width="1.1" height="6.0"/><rect x="864.3" y="740.5" width="1.1" height="6.0"/><rect x="871.1" y="740.5" width="1.1" height="6.0"/><rect x="877.9" y="740.5" width="1.1" height="6.0"/><rect x="884.6" y="740.5" width="1.1" height="15.0"/><rect x="891.4" y="740.5" width="1.1" height="6.0"/><rect x="898.2" y="740.5" width="1.1" height="6.0"/><rect x="905.0" y="740.5" width="1.1" height="6.0"/><rect x="911.8" y="740.5" width="1.1" height="6.0"/><rect x="918.6" y="740.5" width="1.1" height="10.5"/><rect x="925.4" y="740.5" width="1.1" height="6.0"/><rect x="932.2" y="740.5" width="1.1" height="6.0"/><rect x="938.9" y="740.5" width="1.1" height="6.0"/><rect x="945.7" y="740.5" width="1.1" height="6.0"/><rect x="952.5" y="740.5" width="1.1" height="15.0"/><rect x="959.3" y="740.5" width="1.1" height="6.0"/><rect x="966.1" y="740.5" width="1.1" height="6.0"/><rect x="972.9" y="740.5" width="1.1" height="6.0"/><rect x="979.7" y="740.5" width="1.1" height="6.0"/><rect x="986.5" y="740.5" width="1.1" height="10.5"/><rect x="993.2" y="740.5" width="1.1" height="6.0"/><rect x="1000.0" y="740.5" width="1.1" height="6.0"/><rect x="1006.8" y="740.5" width="1.1" height="6.0"/><rect x="1013.6" y="740.5" width="1.1" height="6.0"/><rect x="1020.4" y="740.5" width="1.1" height="15.0"/><rect x="1027.2" y="740.5" width="1.1" height="6.0"/><rect x="1034.0" y="740.5" width="1.1" height="6.0"/><rect x="1040.8" y="740.5" width="1.1" height="6.0"/><rect x="1047.5" y="740.5" width="1.1" height="6.0"/><rect x="1054.3" y="740.5" width="1.1" height="10.5"/><rect x="1061.1" y="740.5" width="1.1" height="6.0"/><rect x="1067.9" y="740.5" width="1.1" height="6.0"/><rect x="1074.7" y="740.5" width="1.1" height="6.0"/><rect x="1081.5" y="740.5" width="1.1" height="6.0"/><rect x="1088.3" y="740.5" width="1.1" height="15.0"/><rect x="1095.0" y="740.5" width="1.1" height="6.0"/><rect x="1101.8" y="740.5" width="1.1" height="6.0"/><rect x="1108.6" y="740.5" width="1.1" height="6.0"/><rect x="1115.4" y="740.5" width="1.1" height="6.0"/><rect x="1122.2" y="740.5" width="1.1" height="10.5"/><rect x="1129.0" y="740.5" width="1.1" height="6.0"/><rect x="1135.8" y="740.5" width="1.1" height="6.0"/><rect x="1142.6" y="740.5" width="1.1" height="6.0"/><rect x="1149.3" y="740.5" width="1.1" height="6.0"/><rect x="1156.1" y="740.5" width="1.1" height="15.0"/><rect x="1162.9" y="740.5" width="1.1" height="6.0"/><rect x="1169.7" y="740.5" width="1.1" height="6.0"/><rect x="1176.5" y="740.5" width="1.1" height="6.0"/><rect x="1183.3" y="740.5" width="1.1" height="6.0"/><rect x="1190.1" y="740.5" width="1.1" height="10.5"/><rect x="1196.9" y="740.5" width="1.1" height="6.0"/><rect x="1203.6" y="740.5" width="1.1" height="6.0"/><rect x="1210.4" y="740.5" width="1.1" height="6.0"/><rect x="1217.2" y="740.5" width="1.1" height="6.0"/><rect x="1224.0" y="740.5" width="1.1" height="15.0"/></g><g class="axl"><text x="528.6" y="153.5" text-anchor="end">0,5</text><text x="528.6" y="212.6" text-anchor="end">0,4</text><text x="528.6" y="271.6" text-anchor="end">0,3</text><text x="528.6" y="330.7" text-anchor="end">0,2</text><text x="528.6" y="389.8" text-anchor="end">0,1</text><text x="528.6" y="448.9" text-anchor="end">0</text><text x="528.6" y="507.9" text-anchor="end">-0,1</text><text x="528.6" y="567.0" text-anchor="end">-0,2</text><text x="528.6" y="626.1" text-anchor="end">-0,3</text><text x="528.6" y="685.1" text-anchor="end">-0,4</text><text x="528.6" y="744.2" text-anchor="end">-0,5</text><text x="545.9" y="766.4" text-anchor="middle">3187</text><text x="613.8" y="766.4" text-anchor="middle">3188</text><text x="681.6" y="766.4" text-anchor="middle">3189</text><text x="749.5" y="766.4" text-anchor="middle">3190</text><text x="817.4" y="766.4" text-anchor="middle">3191</text><text x="885.2" y="766.4" text-anchor="middle">3192</text><text x="953.1" y="766.4" text-anchor="middle">3193</text><text x="1021.0" y="766.4" text-anchor="middle">3194</text><text x="1088.9" y="766.4" text-anchor="middle">3195</text><text x="1156.7" y="766.4" text-anchor="middle">3196</text><text x="1224.6" y="766.4" text-anchor="middle">3197</text><text x="860" y="780" textLength="49.5" lengthAdjust="spacing" style="letter-spacing:0;font-size:10.2px">Zeit t in ms</text></g><rect x="438.5" y="132.5" width="811.2" height="656.7" fill="none" stroke="#8a8a8a" stroke-width="1.1"/></svg>
<div class="a" style="left:0;top:659px;width:815px;height:76px;background:#fff"></div>
<div class="gb" style="left:4px;top:669px;width:104px;height:41px"><i><span style="letter-spacing:-0.240px">Druckeinheit</span></i></div>
<div class="combo" style="left:16px;top:683px;width:80px;height:19px"><span style="letter-spacing:-0.727px">0,1 Pa</span><svg class="a" style="right:5px;top:5px" width="11" height="7" fill="none" stroke="#333" stroke-width="1"><path d="M1 1l4.500 4.500L10 1"/></svg></div>
<div class="btn" style="left:303.300px;top:666px;width:101.500px;height:21.500px"><span style="letter-spacing:-0.120px">Hilfe: Zoom</span></div>
<div class="btn" style="left:409px;top:666px;width:102px;height:21.500px"><span style="letter-spacing:-0.170px">Fadenkreuz löschen</span></div>
<div class="btn" style="left:303.300px;top:691px;width:101.500px;height:21.300px"><span style="letter-spacing:-0.180px">Schaubild</span></div>
<div class="btn" style="left:409px;top:691px;width:102px;height:21.300px"><span style="letter-spacing:-0.358px">Tabelle</span></div>
<div class="gb" style="left:707px;top:669px;width:104px;height:41px"><i><span style="letter-spacing:-0.314px">Zeiteinheit</span></i></div>
<div class="combo" style="left:719px;top:683px;width:80px;height:19px"><span style="letter-spacing:-0.566px">1 ms</span><svg class="a" style="right:5px;top:5px" width="11" height="7" fill="none" stroke="#333" stroke-width="1"><path d="M1 1l4.500 4.500L10 1"/></svg></div>
<div class="a" style="left:0;top:716px;width:815px;height:18px;background:#f0f0f0;border-top:1px solid #d7d7d7"></div>
<div class="a" style="left:119px;top:718px;width:1px;height:15px;background:#d0d0d0"></div>
<div class="a" style="left:319px;top:718px;width:1px;height:15px;background:#d0d0d0"></div>
<div class="a" style="left:519px;top:718px;width:1px;height:15px;background:#d0d0d0"></div>
<div class="a sm" style="left:34px;top:720px"><span style="letter-spacing:-0.580px">Fadenkreuz:</span></div>
<div class="a sm" style="left:190px;top:720px"><span style="letter-spacing:-0.450px">t= 3191,82 ms</span></div>
<div class="a sm" style="left:390.700px;top:720px"><span style="letter-spacing:-0.489px">p(t)= 0,466 Pa</span></div>
<svg class="a" style="left:803px;top:722px" width="10" height="10" fill="#b8b8b8"><rect x="7" y="1" width="2" height="2"/><rect x="4" y="4" width="2" height="2"/><rect x="7" y="4" width="2" height="2"/><rect x="1" y="7" width="2" height="2"/><rect x="4" y="7" width="2" height="2"/><rect x="7" y="7" width="2" height="2"/></svg>
</div></div>
<div class="mw " style="left:18px;top:706px;width:399.8px;height:156px"><div class="hl"></div><div class="mi"><svg class="ico" viewBox="0 0 16 16" width="16" height="16"><rect width="16" height="16" fill="#0505a6"/><g fill="#ac0000"><polygon points="5.6,0 10.4,0 8.6,5 7.4,5"/><polygon points="5.6,16 10.4,16 8.6,11 7.4,11"/><polygon points="0,0 1.8,0 7,5.6 5.8,6.2 0,1.6"/><polygon points="16,0 14.2,0 9,5.6 10.2,6.2 16,1.6"/><polygon points="0,16 1.8,16 7,10.4 5.8,9.8 0,14.4"/><polygon points="16,16 14.2,16 9,10.4 10.2,9.8 16,14.4"/><polygon points="0,3.6 0,5.2 5.4,7.2 6,6.2"/><polygon points="16,3.6 16,5.2 10.6,7.2 10,6.2"/><polygon points="0,12.4 0,10.8 5.4,8.8 6,9.8"/><polygon points="16,12.4 16,10.8 10.6,8.8 10,9.8"/><polygon points="0,7 0,9 3.4,8.4 3.4,7.6"/><polygon points="16,7 16,9 12.6,8.4 12.6,7.6"/></g></svg></div><div class="ttl"><span style="letter-spacing:-0.445px">LZF: Schallpegel mit Zeitbewertung FAST</span></div><div class="cb" style="left:288px"><svg viewBox="0 0 32 18" width="32" height="18"><rect x="10.5" y="8.5" width="11" height="4" rx="1.2" fill="#f4f4f4" stroke="#4e5563" stroke-width="1"/></svg></div><div class="cb" style="left:322px"><svg viewBox="0 0 32 18" width="32" height="18"><rect x="10.5" y="4.5" width="11" height="8.5" rx="1.2" fill="#f4f4f4" stroke="#4e5563"/><rect x="13.5" y="7.5" width="5" height="3" fill="#c9d6e4" stroke="#4e5563"/></svg></div><div class="cb" style="left:356px"><svg viewBox="0 0 32 18" width="32" height="18"><path d="M10.300 4.400h4.300l1.400 2l1.400-2h4.300l-3.650 4.400l3.650 4.400h-4.300l-1.400-2l-1.400 2h-4.300l3.650-4.400z" fill="#f6f6f6" stroke="#4e5563" stroke-width="1" stroke-linejoin="round"/></svg></div><div class="cl"><svg class="bars" style="left:21.9px;top:19.8px" width="342" height="72.6"><rect x="0.00" y="0" width="3.6" height="72.6" fill="#00ff00"/><rect x="6.87" y="0" width="3.6" height="72.6" fill="#00ff00"/><rect x="13.74" y="0" width="3.6" height="72.6" fill="#00ff00"/><rect x="20.61" y="0" width="3.6" height="72.6" fill="#00ff00"/><rect x="27.48" y="0" width="3.6" height="72.6" fill="#00ff00"/><rect x="34.35" y="0" width="3.6" height="72.6" fill="#00ff00"/><rect x="41.22" y="0" width="3.6" height="72.6" fill="#00ff00"/><rect x="48.09" y="0" width="3.6" height="72.6" fill="#00ff00"/><rect x="54.96" y="0" width="3.6" height="72.6" fill="#00ff00"/><rect x="61.83" y="0" width="3.6" height="72.6" fill="#00ff00"/><rect x="68.70" y="0" width="3.6" height="72.6" fill="#00ff00"/><rect x="75.57" y="0" width="3.6" height="72.6" fill="#00ff00"/><rect x="82.44" y="0" width="3.6" height="72.6" fill="#00ff00"/><rect x="89.31" y="0" width="3.6" height="72.6" fill="#00ff00"/><rect x="96.18" y="0" width="3.6" height="72.6" fill="#00ff00"/><rect x="103.05" y="0" width="3.6" height="72.6" fill="#00ff00"/><rect x="109.92" y="0" width="3.6" height="72.6" fill="#00ff00"/><rect x="116.79" y="0" width="3.6" height="72.6" fill="#00ff00"/><rect x="123.66" y="0" width="3.6" height="72.6" fill="#00ff00"/><rect x="130.53" y="0" width="3.6" height="72.6" fill="#00ff00"/><rect x="137.40" y="0" width="3.6" height="72.6" fill="#00ff00"/><rect x="144.27" y="0" width="3.6" height="72.6" fill="#00ff00"/><rect x="151.14" y="0" width="3.6" height="72.6" fill="#00ff00"/><rect x="158.01" y="0" width="3.6" height="72.6" fill="#00ff00"/><rect x="164.88" y="0" width="3.6" height="72.6" fill="#00ff00"/><rect x="171.75" y="0" width="3.6" height="72.6" fill="#00ff00"/><rect x="178.62" y="0" width="3.6" height="72.6" fill="#00ff00"/><rect x="185.49" y="0" width="3.6" height="72.6" fill="#00ff00"/><rect x="192.36" y="0" width="3.6" height="72.6" fill="#00ff00"/><rect x="199.23" y="0" width="3.6" height="72.6" fill="#00ff00"/><rect x="206.10" y="0" width="3.6" height="72.6" fill="#ffc000"/><rect x="212.97" y="0" width="3.6" height="72.6" fill="#ffffb4"/><rect x="219.84" y="0" width="3.6" height="72.6" fill="#ffffb4"/><rect x="226.71" y="0" width="3.6" height="72.6" fill="#ffffb4"/><rect x="233.58" y="0" width="3.6" height="72.6" fill="#ffffb4"/><rect x="240.45" y="0" width="3.6" height="72.6" fill="#ffcccc"/><rect x="247.32" y="0" width="3.6" height="72.6" fill="#ffcccc"/><rect x="254.19" y="0" width="3.6" height="72.6" fill="#ffcccc"/><rect x="261.06" y="0" width="3.6" height="72.6" fill="#ffcccc"/><rect x="267.93" y="0" width="3.6" height="72.6" fill="#ffcccc"/><rect x="274.80" y="0" width="3.6" height="72.6" fill="#ffcccc"/><rect x="281.67" y="0" width="3.6" height="72.6" fill="#ffcccc"/><rect x="288.54" y="0" width="3.6" height="72.6" fill="#ffcccc"/><rect x="295.41" y="0" width="3.6" height="72.6" fill="#ffcccc"/><rect x="302.28" y="0" width="3.6" height="72.6" fill="#ffcccc"/><rect x="309.15" y="0" width="3.6" height="72.6" fill="#ffcccc"/><rect x="316.02" y="0" width="3.6" height="72.6" fill="#ffcccc"/><rect x="322.89" y="0" width="3.6" height="72.6" fill="#ffcccc"/><rect x="329.76" y="0" width="3.6" height="72.6" fill="#ffcccc"/><rect x="336.63" y="0" width="3.6" height="72.6" fill="#ffcccc"/></svg><div class="big" style="left:101.3px;top:32.3px;font-size:56px;line-height:56px;"><span style="display:inline-block;transform-origin:0 0;transform:scaleX(0.9376)">81,6 dB</span></div><div class="a sm" style="left:65px;top:98px"><span style="letter-spacing:-0.044px">LZeq: 79,9 dB</span></div><div class="a sm" style="left:249px;top:98px"><span style="letter-spacing:-0.170px">LZFmax: 83,1 dB</span></div></div></div>

</div></div>
<!-- scrollbars -->
<div class="a" style="left:1261px;top:93px;width:19px;height:781px;background:#f0f0f0"></div>
<div class="a" style="left:1269px;top:110px;width:2px;height:697px;background:#868686;border-radius:1px"></div>
<div class="a" style="left:0;top:874px;width:1280px;height:19px;background:#f0f0f0"></div>
<div class="a" style="left:433px;top:882px;width:728px;height:2px;background:#868686;border-radius:1px"></div>
<div class="a" style="left:0;top:93px;width:2px;height:781px;background:#808080"></div>
<!-- status bar -->
<div class="a" style="left:0;top:893px;width:1280px;height:19px;background:#f0f0f0;border-top:1px solid #d7d7d7"></div>
<div class="a" style="left:95px;top:895px;width:1px;height:16px;background:#d7d7d7"></div>
<div class="a sm" style="left:2.500px;top:897px"><span style="letter-spacing:-0.573px">Bereit</span></div>
<div class="a" style="left:0;top:912px;width:1280px;height:3px;background:linear-gradient(90deg,#dfe6ee 0,#dfe6ee 40%,#dbe9d2 60%,#e2ecd8 100%)"></div>
<!-- ================= dialog ================= -->
<div id="dlg" class="a">
 <div class="a cap">
  <div class="a" style="left:8px;top:6.500px"><svg class="ico" viewBox="0 0 16 16" width="16" height="16"><rect width="16" height="16" fill="#0505a6"/><g fill="#ac0000"><polygon points="5.6,0 10.4,0 8.6,5 7.4,5"/><polygon points="5.6,16 10.4,16 8.6,11 7.4,11"/><polygon points="0,0 1.8,0 7,5.6 5.8,6.2 0,1.6"/><polygon points="16,0 14.2,0 9,5.6 10.2,6.2 16,1.6"/><polygon points="0,16 1.8,16 7,10.4 5.8,9.8 0,14.4"/><polygon points="16,16 14.2,16 9,10.4 10.2,9.8 16,14.4"/><polygon points="0,3.6 0,5.2 5.4,7.2 6,6.2"/><polygon points="16,3.6 16,5.2 10.6,7.2 10,6.2"/><polygon points="0,12.4 0,10.8 5.4,8.8 6,9.8"/><polygon points="16,12.4 16,10.8 10.6,8.8 10,9.8"/><polygon points="0,7 0,9 3.4,8.4 3.4,7.6"/><polygon points="16,7 16,9 12.6,8.4 12.6,7.6"/></g></svg></div>
  <div class="a" style="left:29px;top:7px;font-size:12px;line-height:16px;white-space:pre"><span style="letter-spacing:0.036px">Frequenzgang Mikrofon</span></div>
  <svg class="a" style="left:590px;top:0" width="136" height="30" fill="none" stroke="#1a1a1a" stroke-width="1.1"><path d="M16.500 13.500h10.500"/><rect x="62" y="9" width="9.500" height="9.500" rx="1"/><path d="M108 8.500l10 10M118 8.500l-10 10"/></svg>
 </div>
 <div class="a menu">
  <span style="left:7.300px"><span style="letter-spacing:0.118px">Importieren</span></span>
  <span style="left:83px;color:#8c8c8c"><span style="letter-spacing:-0.227px">Speichern</span></span>
  <span style="left:149.300px"><span style="letter-spacing:-0.196px">Löschen</span></span>
 </div>
 <div class="a txt">
  <div style="top:3.4px"><span style="letter-spacing:-0.072px">Hier kann der Frequenzgang des Mikrofons als Textdatei importiert werden.</span></div>
  <div style="top:33.4px"><span style="letter-spacing:-0.055px">Falls Sie das Mikrofon Umik-1 (miniDSP, 2.Generation) verwenden, ist eine weitere Kalibrierung nicht unbedingt notwendig, da in der</span></div>
  <div style="top:48.4px"><span style="letter-spacing:-0.073px">Kalibrierungsdatei dieses Mikrofons bereits der Kalibrierungsfaktor enthalten ist.</span></div>
  <div style="top:63.4px"><span style="letter-spacing:-0.023px">Die Kalibrierungsdatei für Ihr Umik-1-Mikrofon können Sie auf folgender Seite downloaden:</span></div>
  <div style="top:93.4px"><span style="letter-spacing:0.264px">https://www.minidsp.com/products/acoustic-measurement/umik-1</span></div>
  <div style="top:123.4px"><span style="letter-spacing:-0.153px">Geben Sie auf dieser Seite die Nummer Ihres Umik-1-Mikrofons ein (z.B. 714-8604) und Sie erhalten die individuell passende</span></div>
  <div style="top:138.4px"><span style="letter-spacing:-0.074px">Kalibrierungsdatei.</span></div>
  <div style="top:168.4px"><span style="letter-spacing:-0.065px">Bei anderen Mikrofonen ist eine Kalibrierung nach Import des Frequenzgangs zwingend erforderlich.</span></div>
  <div style="top:183.4px"><span style="letter-spacing:-0.130px">Der Aufbau einer passenden Kalibrierungsdatei wird in der Anleitung des Spaichinger Schallpegelmessers Pro beschrieben.</span></div>
  <i class="a" style="left:2.500px;top:198.5px;width:1px;height:14px;background:#000"></i>
  <div class="a" style="left:701px;top:0;width:16px;height:309px;background:#f0f0f0"></div>
  <svg class="a" style="left:701px;top:0" width="16" height="309" fill="#a3a3a3"><path d="M4 12.500L8 6.500L12 12.500z"/><path d="M4 298.500L8 304.500L12 298.500z"/></svg>
 </div>
 <div class="a" style="left:3px;top:363px;width:720px;height:2px;background:#0067c0"></div>
 <div class="a" style="left:3px;top:365px;width:720px;height:24px;background:#fff"></div>
 <div class="a" style="left:207.400px;top:371px;font-size:12px;line-height:16px;white-space:pre"><span style="letter-spacing:-0.164px">Frequenzgang und Kalibrierungsfaktor geladen: 7148604.txt</span></div>
</div>
</body></html>
